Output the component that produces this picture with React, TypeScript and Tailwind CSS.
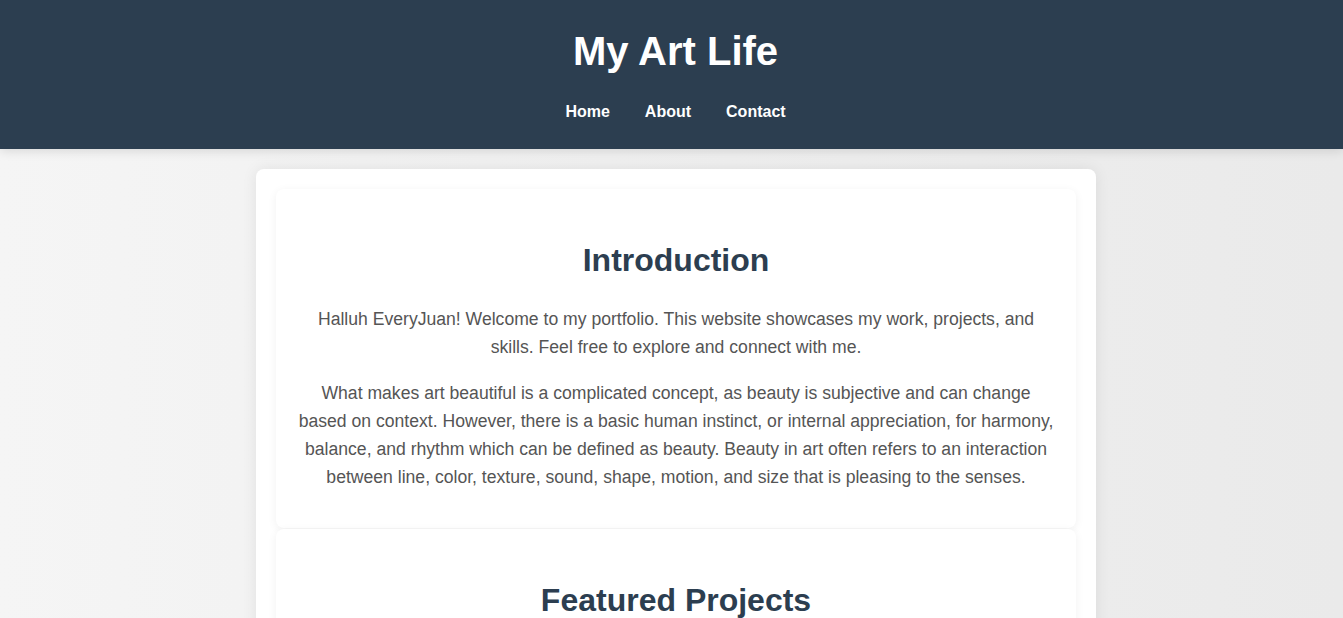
const projects = [
  { title: "Watercolor Landscapes", text: "A series of soft washes exploring light over hills, rivers and quiet mornings." },
  { title: "Charcoal Portraits", text: "Studies of faces and expressions drawn with charcoal and a lot of smudging." },
  { title: "Digital Sketchbook", text: "Daily doodles, color experiments and character ideas made on a tablet." },
];

function Section({ title, children }: { title: string; children: React.ReactNode }) {
  return (
    <section className="mb-px rounded-lg bg-white px-5 pt-5 pb-[19px] text-center shadow-[0_2px_10px_rgba(0,0,0,0.06)]">
      <h2 className="mt-[33px] mb-[26px] text-[32px] leading-[37px] font-bold text-[#2c3e50]">{title}</h2>
      {children}
    </section>
  );
}

export default function App() {
  return (
    <div className="min-h-screen bg-gradient-to-r from-[#f5f5f5] to-[#eaeaea] font-['Liberation_Sans',Arial,sans-serif]">
      <header className="relative z-10 bg-[#2c3e50] pl-2 pt-[28px] pb-[28px] text-center text-white shadow-[0_2px_10px_rgba(0,0,0,0.12)]">
        <h1 className="text-[40px] leading-[46px] font-bold">My Art Life</h1>
        <nav className="mt-[29px] flex justify-center gap-[35px] text-base leading-[18px] font-bold">
          <a href="#">Home</a>
          <a href="#">About</a>
          <a href="#">Contact</a>
        </nav>
      </header>

      <div className="pl-[9px] pt-5 pb-10">
        <main className="mx-auto w-[840px] rounded-lg bg-white p-5 shadow-[0_0_15px_rgba(0,0,0,0.08)]">
          <Section title="Introduction">
            <p className="mb-[18px] text-[17.6px] leading-[28px] text-[#555]">
              Halluh EveryJuan! Welcome to my portfolio. This website showcases my work, projects, and skills. Feel free to explore and connect with me.
            </p>
            <p className="mb-[18px] text-[17.6px] leading-[28px] text-[#555]">
              What makes art beautiful is a complicated concept, as beauty is subjective and can change based on context. However, there is a basic human instinct, or internal appreciation, for harmony, balance, and rhythm which can be defined as beauty. Beauty in art often refers to an interaction between line, color, texture, sound, shape, motion, and size that is pleasing to the senses.
            </p>
          </Section>

          <Section title="Featured Projects">
            <div className="grid grid-cols-3 gap-4 pb-2">
              {projects.map((p) => (
                <div key={p.title} className="rounded-lg bg-[#f7f7f7] p-4 shadow-[0_2px_6px_rgba(0,0,0,0.06)]">
                  <h3 className="mb-2 text-lg font-bold text-[#2c3e50]">{p.title}</h3>
                  <p className="text-[15px] leading-6 text-[#555]">{p.text}</p>
                </div>
              ))}
            </div>
          </Section>
        </main>
      </div>
    </div>
  );
}
